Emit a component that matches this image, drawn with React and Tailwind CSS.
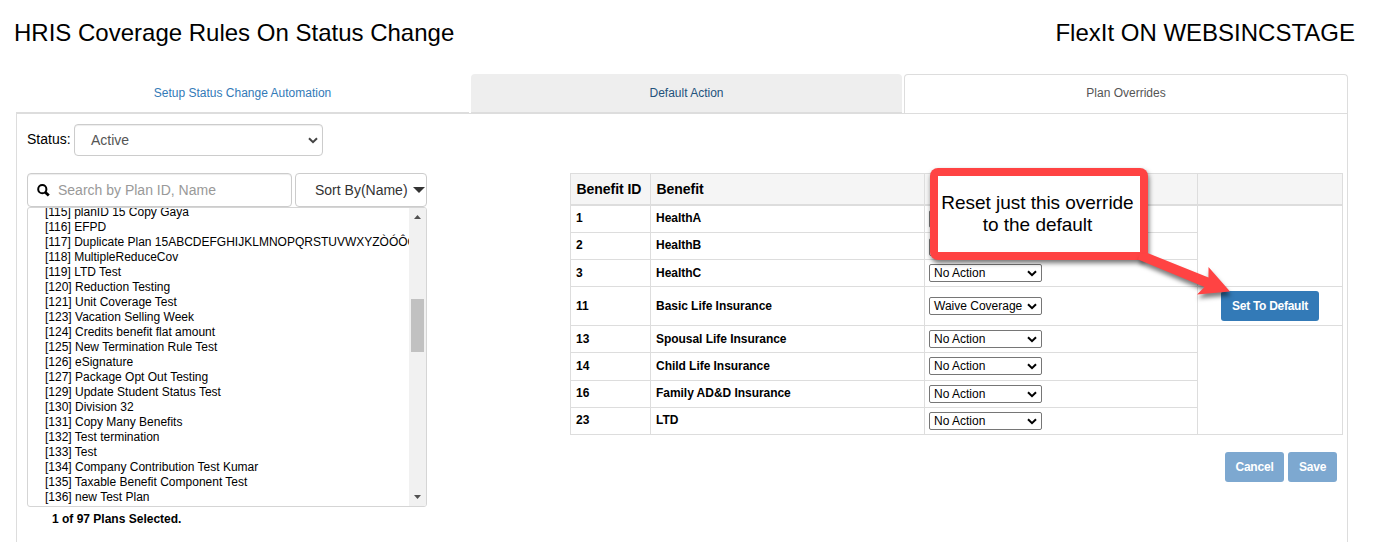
import React from "react";

const plans = [
  "[115] planID 15 Copy Gaya",
  "[116] EFPD",
  "[117] Duplicate Plan 15ABCDEFGHIJKLMNOPQRSTUVWXYZÒÓÔÕ",
  "[118] MultipleReduceCov",
  "[119] LTD Test",
  "[120] Reduction Testing",
  "[121] Unit Coverage Test",
  "[123] Vacation Selling Week",
  "[124] Credits benefit flat amount",
  "[125] New Termination Rule Test",
  "[126] eSignature",
  "[127] Package Opt Out Testing",
  "[129] Update Student Status Test",
  "[130] Division 32",
  "[131] Copy Many Benefits",
  "[132] Test termination",
  "[133] Test",
  "[134] Company Contribution Test Kumar",
  "[135] Taxable Benefit Component Test",
  "[136] new Test Plan",
];

const benefits = [
  { id: "1", name: "HealthA", action: "", h: "h-[27px]", pad: "pt-1", selectPad: "pt-1" },
  { id: "2", name: "HealthB", action: "", h: "h-[27px]", pad: "pt-1", selectPad: "pt-[5px]" },
  { id: "3", name: "HealthC", action: "No Action", h: "h-[27px]", pad: "pt-[5px]", selectPad: "pt-1" },
  { id: "11", name: "Basic Life Insurance", action: "Waive Coverage", h: "h-[39px]", pad: "pt-[11px]", selectPad: "pt-[10px]" },
  { id: "13", name: "Spousal Life Insurance", action: "No Action", h: "h-[27px]", pad: "pt-[5px]", selectPad: "pt-1" },
  { id: "14", name: "Child Life Insurance", action: "No Action", h: "h-[28px]", pad: "pt-[5px]", selectPad: "pt-1" },
  { id: "16", name: "Family AD&D Insurance", action: "No Action", h: "h-[27px]", pad: "pt-[4px]", selectPad: "pt-1" },
  { id: "23", name: "LTD", action: "No Action", h: "h-[27px]", pad: "pt-[4px]", selectPad: "pt-1" },
];

function Chevron({ className }) {
  return (
    <svg className={className} width="10" height="7" viewBox="0 0 10 7" fill="none">
      <path d="M1 1.2 5 5.2 9 1.2" stroke="currentColor" strokeWidth="2" />
    </svg>
  );
}

function ActionSelect({ value }) {
  return (
    <div className="flex h-[18px] w-[113px] items-center justify-between rounded-[2px] border border-[#767676] bg-white pr-1 pl-1 text-[12px] leading-4 text-black">
      <span className="whitespace-nowrap">{value}</span>
      {value && <Chevron className="shrink-0" />}
    </div>
  );
}

function BenefitRow({ row }) {
  return (
    <div className={`flex shrink-0 border-b border-[#ddd] ${row.h}`}>
      <div className={`w-[80px] border-r border-[#ddd] pl-[5px] ${row.pad}`}>{row.id}</div>
      <div className={`w-[274px] border-r border-[#ddd] pl-[5px] tracking-[-0.04px] ${row.pad}`}>{row.name}</div>
      <div className={`flex w-[273px] items-start border-r border-[#ddd] pl-1 font-normal ${row.selectPad}`}>
        <ActionSelect value={row.action} />
      </div>
    </div>
  );
}

function BenefitTable() {
  return (
    <div className="w-[773px] border-t border-l border-[#ddd] text-[12px] leading-4 font-bold">
      <div className="flex h-8 border-b-2 border-[#ddd] bg-[#f5f5f5] text-[14px] leading-[30px] tracking-[-0.05px]">
        <div className="w-[80px] border-r border-[#ddd] pl-[5.5px]">Benefit ID</div>
        <div className="w-[274px] border-r border-[#ddd] pl-[5.5px]">Benefit</div>
        <div className="w-[273px] border-r border-[#ddd]" />
        <div className="w-[145px] border-r border-[#ddd]" />
      </div>
      <div className="flex">
        <div className="w-[627px]">
          {benefits.map((row) => (
            <BenefitRow key={row.id} row={row} />
          ))}
        </div>
        <div className="flex w-[145px] flex-col border-r border-[#ddd]">
          <div className="h-[81px] border-b border-[#ddd]" />
          <div className="flex h-[39px] items-start justify-center border-b border-[#ddd] pt-1">
            <button className="h-[30px] w-[98px] rounded-[3px] bg-[#337ab7] text-[12px] font-bold tracking-[-0.28px] text-white">
              Set To Default
            </button>
          </div>
          <div className="flex-1 border-b border-[#ddd]" />
        </div>
      </div>
    </div>
  );
}

function PlanList() {
  return (
    <div className="flex h-[300px] w-[400px] overflow-hidden rounded-[3px] border border-[#d5d5d5] bg-white">
      <div className="min-w-0 flex-1 overflow-hidden pl-[17px] text-[12px] leading-[15px] text-black">
        <div className="-mt-[3px]">
          {plans.map((p) => (
            <div key={p} className="whitespace-nowrap">{p}</div>
          ))}
        </div>
      </div>
      <div className="flex w-[17px] shrink-0 flex-col items-center bg-[#f1f1f1]">
        <svg className="mt-[7px]" width="7" height="4" viewBox="0 0 7 4">
          <path d="M0 4 3.5 0 7 4Z" fill="#505050" />
        </svg>
        <div className="mt-20 h-[53px] w-[13px] bg-[#c1c1c1]" />
        <svg className="mt-auto mb-[7px]" width="7" height="4" viewBox="0 0 7 4">
          <path d="M0 0 3.5 4 7 0Z" fill="#505050" />
        </svg>
      </div>
    </div>
  );
}

function Callout() {
  return (
    <>
      <div className="absolute top-[168px] left-[930px] h-[92px] w-[218px] rounded-lg bg-[#ff4343] p-2 shadow-[1px_3px_5px_rgba(0,0,0,0.55)]">
        <div className="flex h-full flex-col items-center bg-white pt-[16px] pr-[3px] text-[19px] leading-[22px] tracking-[-0.04px] whitespace-nowrap text-black">
          <span>Reset just this override</span>
          <span>to the default</span>
        </div>
      </div>
      <svg
        className="absolute top-[245px] left-[1130px] drop-shadow-[1px_4px_2px_rgba(0,0,0,0.5)]"
        width="110"
        height="60"
        viewBox="0 0 110 60"
      >
        <path d="M17.5 8 78.5 32.5 78.5 22 100 46.5 67 49.5 74.5 42 8 14.5 10 9Z" fill="#ff4343" />
      </svg>
    </>
  );
}

export default function App() {
  return (
    <div className="relative h-[542px] w-[1380px] overflow-hidden bg-white font-['Liberation_Sans',Arial,sans-serif] text-black">
      <header className="flex h-[74px] items-start justify-between pt-[18px] pr-[25px] pl-[14px] text-[24px] leading-[30px]">
        <h1>HRIS Coverage Rules On Status Change</h1>
        <div>FlexIt ON WEBSINCSTAGE</div>
      </header>

      <nav className="ml-4 flex h-[39px] w-[1332px] gap-[2px] text-center text-[12px] leading-[38px]">
        <div className="w-[453px] border-b border-[#ddd] text-[#337ab7]">Setup Status Change Automation</div>
        <div className="w-[431px] rounded-t-[4px] border-b border-[#ddd] bg-[#eee] text-[#23527c]">Default Action</div>
        <div className="w-[444px] rounded-t-[4px] border border-b-0 border-[#ddd] leading-[36px] text-[#555]">Plan Overrides</div>
      </nav>

      <main className="ml-4 flex h-[429px] w-[1332px] border border-b-0 border-[#ddd] pt-[10px] pl-[10px]">
        <section className="w-[543px]">
          <div className="flex text-[14px]">
            <label className="w-[47px] pt-[5px] leading-5">Status:</label>
            <div className="flex h-8 w-[249px] items-center justify-between rounded-[4px] border border-[#ccc] pr-[4px] pl-4 text-[#555] shadow-[inset_0_1px_1px_rgba(0,0,0,0.075)]">
              <span>Active</span>
              <Chevron className="text-[#444]" />
            </div>
          </div>
          <div className="mt-[17px] flex gap-[3px] text-[14px]">
            <div className="flex h-[34px] w-[265px] items-center rounded-[4px] border border-[#ccc] pl-[9px] text-[#999] shadow-[inset_0_1px_1px_rgba(0,0,0,0.075)]">
              <svg width="13" height="13" viewBox="0 0 13 13" fill="none" stroke="#000" strokeWidth="2">
                <circle cx="5.3" cy="5.2" r="4.1" />
                <path d="M8.2 8.2 11.8 11.6" strokeWidth="2.8" />
              </svg>
              <span className="ml-2">Search by Plan ID, Name</span>
            </div>
            <div className="flex h-[34px] w-[132px] items-center rounded-[4px] border border-[#ccc] pl-[19px] text-[#333]">
              <span className="whitespace-nowrap">Sort By(Name)</span>
              <svg className="ml-[5px] shrink-0" width="12" height="6" viewBox="0 0 12 6">
                <path d="M0 0H12L6 6Z" fill="#333" />
              </svg>
            </div>
          </div>
          <PlanList />
          <div className="mt-1 pl-[25px] text-[12px] leading-4 font-bold">1 of 97 Plans Selected.</div>
        </section>

        <section className="pt-[49px]">
          <BenefitTable />
          <div className="mt-[17px] flex justify-end gap-1 pr-[6px] text-[12px] font-bold tracking-[-0.2px] text-white">
            <button className="h-[30px] w-[59px] rounded-[3px] bg-[#7da8d0]">Cancel</button>
            <button className="h-[30px] w-[49px] rounded-[3px] bg-[#7da8d0]">Save</button>
          </div>
        </section>
      </main>

      <Callout />
    </div>
  );
}
